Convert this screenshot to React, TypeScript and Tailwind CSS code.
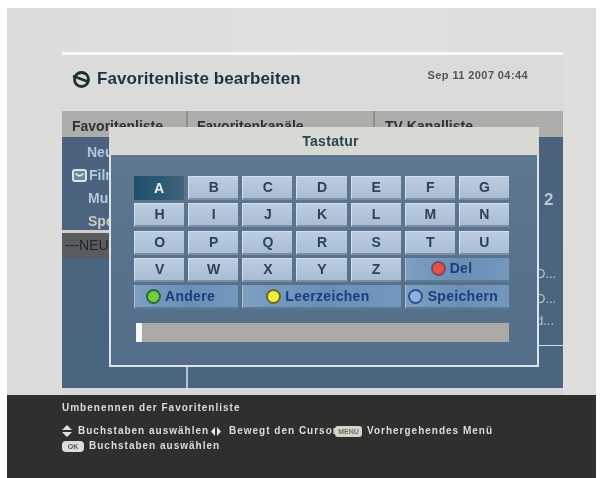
import React from "react";

const font = { fontFamily: '"Liberation Sans", Arial, sans-serif' };

function Key({ label, active }: { label: string; active?: boolean }) {
  return (
    <div
      className={
        active
          ? "flex items-center justify-center h-[24px] bg-gradient-to-r from-[#1f4f68] via-[#2a5a72] to-[#47627c] text-[#eef4f4] text-[14px] font-bold"
          : "flex items-center justify-center h-[24px] bg-gradient-to-b from-[#bccde0] to-[#a9bdd3] border-t border-l border-[#d5e0ea] border-b-2 border-b-[#7a8ea4] text-[#2c4256] text-[14px] font-bold"
      }
    >
      {label}
    </div>
  );
}

function ColorKey({ label, dot, ring, span, gap, textGap }: { label: string; dot: string; ring: string; span: string; gap: string; textGap: string }) {
  return (
    <div className={`${span} ${gap} flex items-center h-[24px] bg-gradient-to-r from-[#7f9fc2] via-[#6a8fb7] to-[#7397bd] border-l border-[#a8c0d8] border-b-2 border-b-[#5d7994] text-[#163f7c] text-[14px] font-bold tracking-[0.3px]`}>
      <span className="w-[15px] h-[15px] rounded-full border-2 shrink-0" style={{ backgroundColor: dot, borderColor: ring }} />
      <span className={textGap}>{label}</span>
    </div>
  );
}

export default function App() {
  const rows = ["ABCDEFG", "HIJKLMN", "OPQRSTU"];
  return (
    <div className="w-[601px] h-[478px] bg-white overflow-hidden blur-[0.7px]" style={font}>
      <div className="ml-[7px] mr-[5px] pt-[8px] h-[478px] flex flex-col">
        <div className="h-[387px] bg-gradient-to-r from-[#dcdcdc] via-[#e0e0de] to-[#dededc] pt-[44px] pl-[55px]">
          {/* Main OSD panel */}
          <div className="relative w-[501px] h-[343px] flex flex-col">
            <div className="h-[3px] bg-[#fbfbf9]" />
            <div className="h-[56px] bg-[#dbdbd9] flex items-start pl-[10px] pr-[35px]">
              <svg width="19" height="19" viewBox="0 0 19 19" className="mt-[15px] shrink-0">
                <circle cx="9.5" cy="9.5" r="7" fill="none" stroke="#1f2e34" strokeWidth="2.8" />
                <path d="M1 6 L17 12" stroke="#1f2e34" strokeWidth="2.8" />
              </svg>
              <span className="ml-[6px] mt-[14px] text-[17px] leading-[20px] font-bold text-[#1b3440] tracking-[0.1px]">Favoritenliste bearbeiten</span>
              <span className="ml-auto mt-[13px] text-[11px] leading-[14px] font-bold text-[#50565a] tracking-[0.4px]">Sep 11 2007 04:44</span>
            </div>
            <div className="h-[26px] bg-[#adadab] flex text-[14px] font-bold text-[#2f3234] leading-[20px]">
              <div className="w-[126px] pl-[10px] pt-[5px] border-r-2 border-[#8e8e8c] h-[22px]">Favoritenliste</div>
              <div className="w-[187px] pl-[9px] pt-[5px] border-r-2 border-[#8e8e8c] h-[22px]">Favoritenkanäle</div>
              <div className="pl-[10px] pt-[5px]">TV Kanalliste</div>
            </div>
            <div className="h-[251px] bg-gradient-to-b from-[#4c627f] to-[#4a6680] flex">
              <div className="w-[126px] border-r-2 border-[#b5c4d0] flex flex-col text-[14px] font-bold text-[#b8c6de]">
                <div className="h-[96px] pt-[4px] border-b-[3px] border-[#cfcfcb]">
                  <div className="h-[23px] pl-[25px] flex items-center">Neu</div>
                  <div className="h-[23px] pl-[10px] flex items-center">
                    <svg width="15" height="13" viewBox="0 0 15 13" className="shrink-0">
                      <rect x="1" y="1" width="13" height="11" rx="2" fill="#6a879c" stroke="#dbe6ea" strokeWidth="2" />
                      <path d="M3.5 4.5 Q7.5 9 11.5 4.5" fill="none" stroke="#dbe6ea" strokeWidth="1.8" />
                    </svg>
                    <span className="ml-[2px]">Film</span>
                  </div>
                  <div className="h-[23px] pl-[26px] flex items-center">Musik</div>
                  <div className="h-[23px] pl-[26px] flex items-center text-[#c6ccc0]">Sport</div>
                </div>
                <div className="h-[25px] bg-[#5a5c5e] flex items-center pl-[3px] font-normal text-[#22272c]">---NEU</div>
              </div>
              <div className="w-[187px] border-r-2 border-transparent" />
              <div className="flex-1 flex flex-col text-[#b9c8d4]">
                <div className="mt-[54px] h-[18px] pl-[169px] text-[17px] leading-[18px] font-bold">2</div>
                <div className="mt-[57px] h-[16px] pl-[161px] text-[13px] leading-[16px]">D...</div>
                <div className="mt-[9px] h-[16px] pl-[161px] text-[13px] leading-[16px]">D...</div>
                <div className="mt-[6px] h-[16px] pl-[161px] text-[13px] leading-[16px]">d...</div>
                <div className="mt-[16px] h-[1px] ml-[160px] mr-[-2px] bg-[#d5e0e6]" />
              </div>
            </div>
            <div className="h-[7px] bg-[#d8d8d6]" />

            {/* Keyboard dialog */}
            <div className="absolute left-[47px] top-[75px] w-[430px] h-[240px] flex flex-col bg-[#dbe5ea]">
              <div className="h-[28px] bg-[#d9d9d3] flex items-center justify-center pl-[13px] text-[14px] font-bold text-[#284650] tracking-[0.3px]">Tastatur</div>
              <div className="flex-1 mx-[2px] mb-[2px] bg-gradient-to-b from-[#5d7791] to-[#546e8a] pt-[21px] pl-[23px] pr-[28px]">
                <div className="grid grid-cols-7 gap-x-[4px] gap-y-[3.25px]">
                  {rows.map((r) => r.split("").map((c) => <Key key={c} label={c} active={c === "A"} />))}
                  {"VWXYZ".split("").map((c) => <Key key={c} label={c} />)}
                  <ColorKey label="Del" dot="#e8504a" ring="#7d4a58" span="col-span-2" gap="pl-[25px]" textGap="ml-[4px]" />
                  <ColorKey label="Andere" dot="#6fd044" ring="#2a6a3a" span="col-span-2" gap="pl-[11px]" textGap="ml-[4px]" />
                  <ColorKey label="Leerzeichen" dot="#eeee44" ring="#6a6a28" span="col-span-3" gap="pl-[23px]" textGap="ml-[4px]" />
                  <ColorKey label="Speichern" dot="#8fb0e0" ring="#2c4f90" span="col-span-2" gap="pl-[2px]" textGap="ml-[5px]" />
                </div>
                <div className="mt-[14px] ml-[2px] h-[19px] w-[373px] bg-[#a9aaa6]">
                  <div className="h-[19px] w-[6px] bg-[#f8f8f8]" />
                </div>
              </div>
            </div>
          </div>
        </div>

        {/* Help bar */}
        <div className="flex-1 bg-[#2f2f2d] pl-[55px] pt-[6px] text-[10px] font-bold text-[#dcdcda] tracking-[1px] leading-[14px]">
          <div>Umbenennen der Favoritenliste</div>
          <div className="mt-[9px] flex items-center h-[14px]">
            <svg width="10" height="12" viewBox="0 0 10 12" className="shrink-0">
              <path d="M5 0 L10 5 L0 5 Z M0 7 L10 7 L5 12 Z" fill="#e0e0de" />
            </svg>
            <span className="ml-[6px] w-[133px] whitespace-nowrap">Buchstaben auswählen</span>
            <svg width="10" height="9" viewBox="0 0 10 9" className="shrink-0">
              <path d="M4 0 L4 9 L0 4.5 Z M6 0 L10 4.5 L6 9 Z" fill="#e8e8e6" />
            </svg>
            <span className="ml-[8px] w-[106px] whitespace-nowrap">Bewegt den Cursor</span>
            <span className="w-[27px] h-[11px] rounded-[3px] bg-[#d4d6cc] text-[#6a6f6a] text-[7px] leading-[11px] text-center tracking-normal">MENU</span>
            <span className="ml-[5px] whitespace-nowrap">Vorhergehendes Menü</span>
          </div>
          <div className="mt-[1px] flex items-center h-[14px]">
            <span className="w-[22px] h-[11px] rounded-[4px] bg-[#dcdcda] text-[#5a5a58] text-[7px] leading-[11px] text-center tracking-normal">OK</span>
            <span className="ml-[5px] whitespace-nowrap">Buchstaben auswählen</span>
          </div>
        </div>
      </div>
    </div>
  );
}
